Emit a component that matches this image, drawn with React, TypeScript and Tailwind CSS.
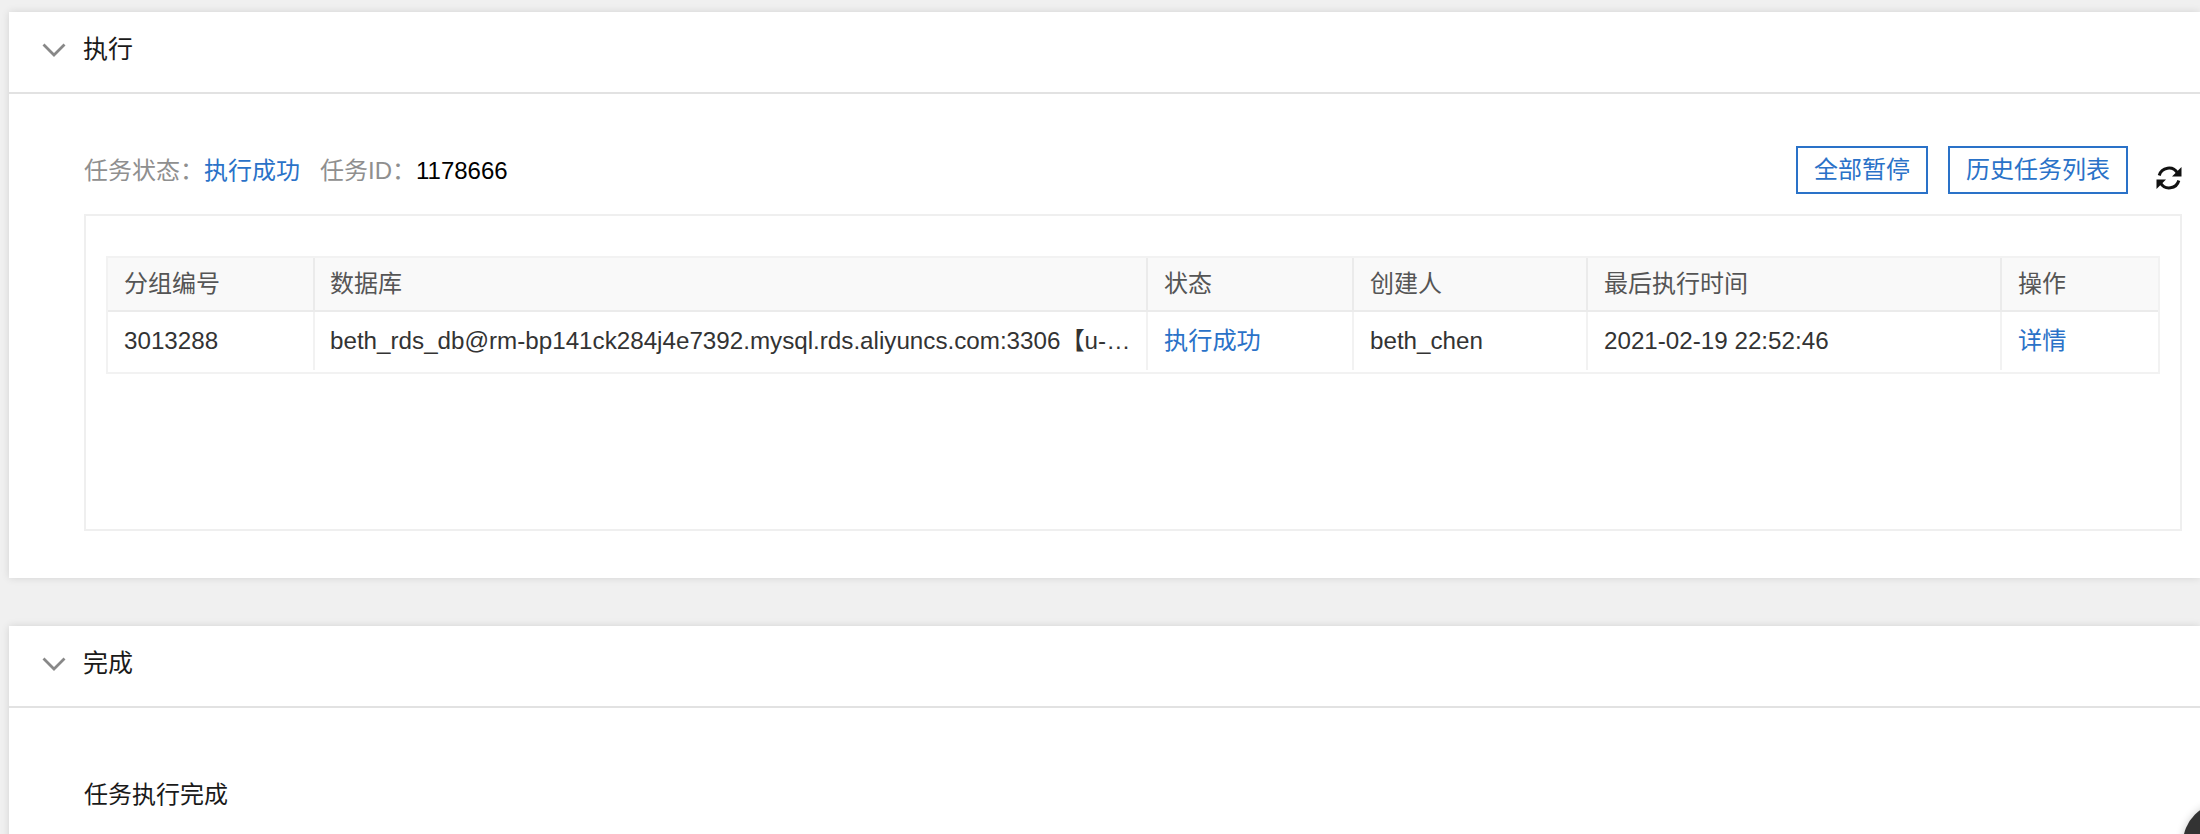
const font = { fontFamily: '"Liberation Sans","Noto Sans CJK SC",sans-serif' };

function Chevron() {
  return (
    <svg width="24" height="14" viewBox="0 0 24 14" fill="none" className="shrink-0">
      <path d="M1.5 1.5 L12 12 L22.5 1.5" stroke="#888888" strokeWidth="2.8" />
    </svg>
  );
}

function Header({ title }: { title: string }) {
  return (
    <div className="flex h-[82px] items-center gap-[17px] border-b-2 border-[#e2e2e2] pb-[4px] pl-[33px] text-[25px] text-[#1a1a1a]">
      <Chevron />
      <span>{title}</span>
    </div>
  );
}

function Refresh() {
  return (
    <svg width="26" height="26" viewBox="0 0 26 26" fill="none" className="ml-[28px] mt-[71px] shrink-0">
      <path d="M3.2 10.5 A10 10 0 0 1 21.5 8" stroke="#111" strokeWidth="3" />
      <path d="M25.5 2 V11.5 H16 Z" fill="#111" />
      <path d="M22.8 15.5 A10 10 0 0 1 4.5 18" stroke="#111" strokeWidth="3" />
      <path d="M0.5 24 V14.5 H10 Z" fill="#111" />
    </svg>
  );
}

const cols = [
  { w: "w-[207px] px-[16px]", h: "分组编号", v: "3013288" },
  { w: "w-[833px] pl-[15px] pr-[12px]", h: "数据库", v: "beth_rds_db@rm-bp141ck284j4e7392.mysql.rds.aliyuncs.com:3306【u-vz7ab3kd9】" },
  { w: "w-[206px] px-[16px]", h: "状态", v: "执行成功", link: true },
  { w: "w-[234px] px-[16px]", h: "创建人", v: "beth_chen" },
  { w: "w-[414px] px-[16px]", h: "最后执行时间", v: "2021-02-19 22:52:46" },
  { w: "w-[156px] px-[16px]", h: "操作", v: "详情", link: true },
];

export default function App() {
  return (
    <div style={font} className="relative h-[834px] overflow-hidden bg-[#f0f0f0] pl-[9px] pt-[12px] text-[24px]">
      <section className="h-[566px] bg-white shadow-[0_0_8px_rgba(0,0,0,0.12)]">
        <Header title="执行" />
        <div className="pl-[75px] pr-[18px]">
          <div className="flex h-[120px] items-start">
            <div className="mt-[62px] flex flex-1 items-center leading-[30px] text-[#8f8f8f]">
              <span>任务状态：</span>
              <span className="text-[#2a72c8]">执行成功</span>
              <span className="ml-[20px]">任务ID：</span>
              <span className="text-black">1178666</span>
            </div>
            <button className="mt-[52px] h-[48px] w-[132px] border-2 border-[#2a72c8] text-[#2a72c8]">全部暂停</button>
            <button className="ml-[20px] mt-[52px] h-[48px] w-[180px] border-2 border-[#2a72c8] text-[#2a72c8]">历史任务列表</button>
            <Refresh />
          </div>
          <div className="h-[317px] border-2 border-[#efefef] bg-white px-[20px] pt-[40px]">
            <div className="w-[2054px] border-2 border-[#f2f2f2]">
              <div className="flex h-[54px] border-b-2 border-[#ebebeb] bg-[#f9f9f9] text-[#555555]">
                {cols.map((c, i) => (
                  <div key={c.h} className={`${c.w} flex shrink-0 items-center ${i < 5 ? "border-r-2 border-[#ebebeb]" : ""}`}>{c.h}</div>
                ))}
              </div>
              <div className="flex h-[60px] pb-[2px] text-[24.2px] text-[#333333]">
                {cols.map((c, i) => (
                  <div key={c.h} className={`${c.w} flex shrink-0 items-center ${i < 5 ? "border-r-2 border-[#f2f2f2]" : ""} ${c.link ? "text-[#2a72c8]" : ""}`}>
                    <span className="truncate">{c.v}</span>
                  </div>
                ))}
              </div>
            </div>
          </div>
        </div>
      </section>
      <section className="mt-[48px] h-[300px] bg-white shadow-[0_0_8px_rgba(0,0,0,0.12)]">
        <Header title="完成" />
        <div className="pl-[75px] pt-[72px] leading-[30px] text-[#1a1a1a]">任务执行完成</div>
      </section>
      <div className="absolute left-[2183px] top-[803px] h-[80px] w-[80px] rounded-full bg-[#333333] shadow-[0_0_8px_rgba(0,0,0,0.2)]" />
    </div>
  );
}
